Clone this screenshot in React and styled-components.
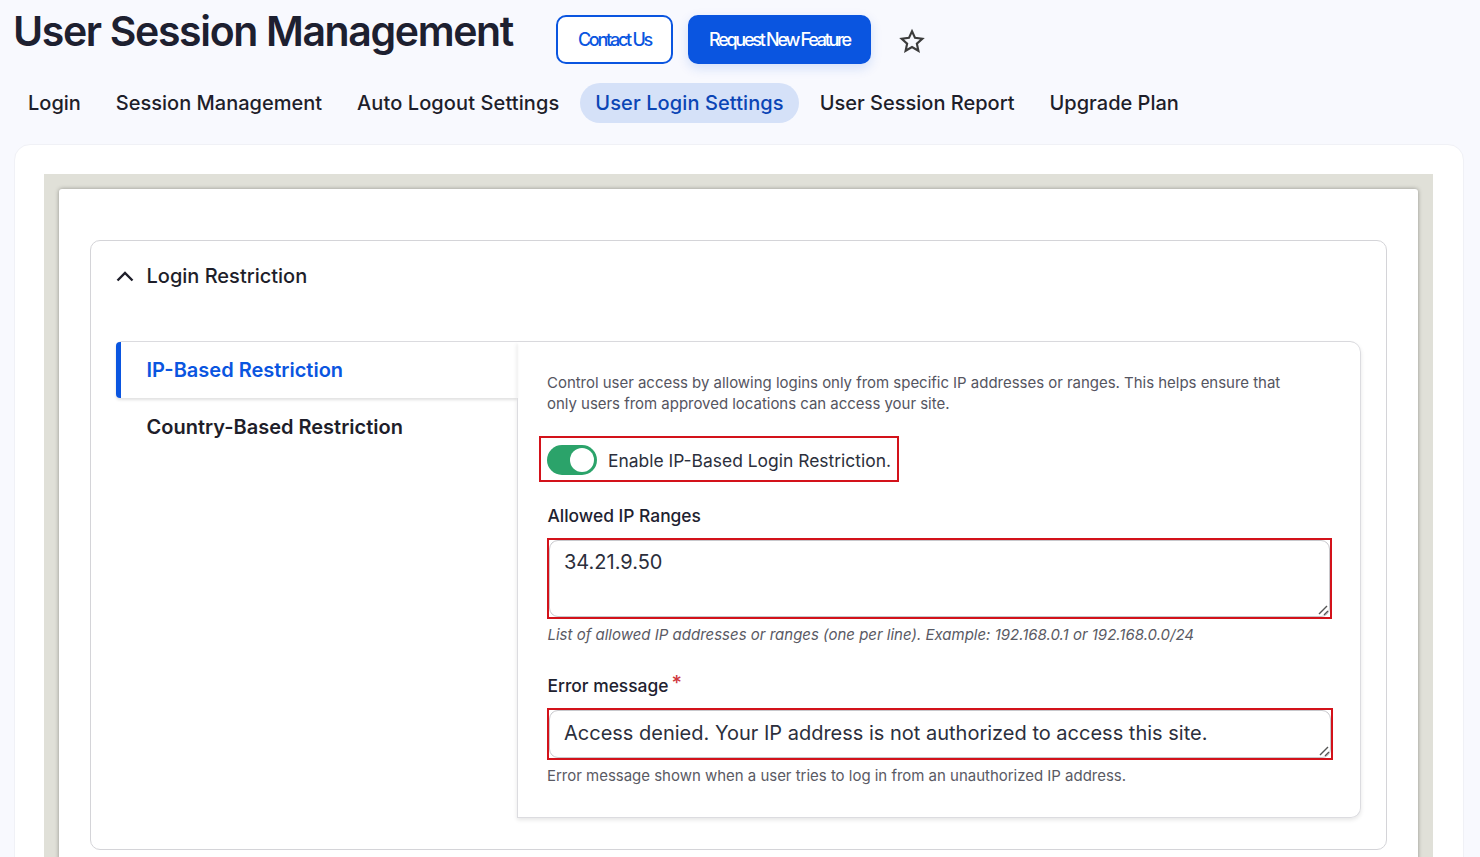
import React from "react";
import styled, { createGlobalStyle } from "styled-components";

const Global = createGlobalStyle`
  html, body { margin: 0; padding: 0; height: 857px; overflow: hidden; background: #f8f9fe; }
  body { font-family: Inter, "Liberation Sans", sans-serif; color: #1e1e2a; }
  #root { height: 857px; overflow: hidden; }
  * { box-sizing: border-box; }
`;

const Page = styled.div`
  width: 1480px;
  padding: 0 16px 0 14px;
`;
const Header = styled.header`
  display: flex;
  align-items: flex-start;
  height: 83px;
`;
const Title = styled.h1`
  margin: 8px 43px 0 -1px;
  font-size: 41px;
  line-height: 46px;
  font-weight: 600;
  letter-spacing: -1.36px;
  color: #1d2030;
  white-space: nowrap;
`;
const Button = styled.button`
  height: 49px;
  margin: 15px 15px 0 0;
  padding: 0;
  width: ${p => p.$w}px;
  border-radius: 10px;
  border: 2px solid #0a55e0;
  font: 500 18px Inter, sans-serif;
  letter-spacing: -2.27px;
  background: ${p => (p.$primary ? "#0a55e0" : "#ffffff")};
  color: ${p => (p.$primary ? "#ffffff" : "#0a55e0")};
  box-shadow: ${p => (p.$primary ? "0 4px 12px rgba(10,85,224,0.16)" : "none")};
`;
const StarWrap = styled.span`
  display: flex;
  margin: 28px 0 0 13px;
  color: #3c3c3c;
  height: 26px;
`;
const Tabs = styled.nav`
  display: flex;
  align-items: center;
  height: 40px;
  gap: 6px;
`;
const Tab = styled.a`
  height: 40px;
  display: flex;
  align-items: center;
  margin-left: ${p => (p.$first ? -0.5 : 0)}px;
  padding: 0 ${p => (p.$active ? 15.5 : 14.5)}px;
  border-radius: 21px;
  font-size: 20px;
  font-weight: 500;
  letter-spacing: ${p => (p.$wide ? 0.1 : 0)}px;
  color: ${p => (p.$active ? "#0b45b5" : "#1e1e2a")};
  background: ${p => (p.$active ? "#d5e1f8" : "transparent")};
  white-space: nowrap;
`;
const Card = styled.section`
  margin-top: 21px;
  width: 1450px;
  height: 760px;
  padding: 29px 30px 0 29px;
  background: #ffffff;
  border: 1px solid #f0f1f6;
  border-radius: 16px;
`;
const Frame = styled.div`
  background: #e0e0d8;
  height: 720px;
  padding: 15px 15px 0;
`;
const Sheet = styled.div`
  background: #ffffff;
  height: 700px;
  padding: 51px 31px 0 31px;
  border-radius: 3px;
  box-shadow: 0 0 4px rgba(0,0,0,0.35);
`;
const Accordion = styled.div`
  border: 1px solid #d4d4d8;
  border-radius: 10px;
  height: 610px;
  padding: 0 26px 0 25px;
`;
const AccordionHead = styled.div`
  display: flex;
  align-items: center;
  gap: 12.5px;
  height: 70px;
  font-size: 20px;
  font-weight: 500;
  color: #1e1e2a;
`;
const VTabs = styled.div`
  display: flex;
  margin-top: 30px;
  border-top: 1px solid #dcdce0;
  border-radius: 6px 10px 0 0;
  height: 477px;
`;
const Side = styled.div`
  width: 401px;
  flex: none;
`;
const SideItem = styled.div`
  height: ${p => (p.$active ? 56 : 57)}px;
  display: flex;
  align-items: center;
  padding-left: ${p => (p.$active ? 25.5 : 30.5)}px;
  font-size: 20px;
  font-weight: 600;
  color: ${p => (p.$active ? "#0a55e0" : "#1e1e2a")};
  border-left: ${p => (p.$active ? "5px solid #0a55e0" : "0")};
  border-radius: ${p => (p.$active ? "4px 0 0 4px" : "0")};
  box-shadow: ${p => (p.$active ? "0 2px 3px rgba(0,0,0,0.12)" : "none")};
`;
const Panel = styled.div`
  flex: 1;
  position: relative;
  padding: 30px 27px 0 30px;
  border-right: 1px solid #dcdce0;
  border-bottom: 1px solid #dcdce0;
  border-radius: 0 10px 10px 0;
  box-shadow: 0 2px 4px rgba(0,0,0,0.1);
  &::before {
    content: "";
    position: absolute;
    left: 0;
    top: 56px;
    bottom: 0;
    border-left: 1px solid #dcdce0;
  }
`;
const Intro = styled.p`
  margin: 0;
  font-size: 15px;
  line-height: 21px;
  letter-spacing: -0.03px;
  color: #55555f;
  width: 750px;
`;
const ToggleRow = styled.div`
  display: inline-flex;
  align-items: center;
  gap: 11px;
  margin: 22px 0 0 -8px;
  height: 46px;
  padding: 2px 6px 0;
  border: 2px solid #d3121a;
`;
const Switch = styled.span`
  position: relative;
  display: block;
  width: 50px;
  height: 30px;
  border-radius: 15px;
  background: #2ba36a;
  &::after {
    content: "";
    position: absolute;
    right: 3px;
    top: 3px;
    width: 24px;
    height: 24px;
    border-radius: 50%;
    background: #ffffff;
  }
`;
const ToggleLabel = styled.span`
  font-size: 17.45px;
  color: #2c2f3c;
`;
const Label = styled.div`
  margin: ${p => p.$mt}px 0 0 0.5px;
  font-size: 17.4px;
  line-height: 24px;
  font-weight: 500;
  color: #1e2230;
  white-space: nowrap;
`;
const Required = styled.sup`
  color: #d0383e;
  font-size: 20px;
  line-height: 0;
  margin-left: 3px;
  vertical-align: 2px;
`;
const RedBox = styled.div`
  position: relative;
  margin-top: ${p => p.$mt}px;
  width: ${p => p.$w}px;
  height: ${p => p.$h}px;
  border: 2px solid #d3121a;
`;
const Field = styled.div`
  height: 100%;
  padding: ${p => p.$pt}px 16px 0 14px;
  border: 1px solid #c8c8cc;
  border-radius: 9px;
  font-size: 20px;
  line-height: 28px;
  color: #2c2f3c;
  background: #ffffff;
  overflow: hidden;
  white-space: nowrap;
`;
const Grip = styled.svg`
  position: absolute;
  right: 1px;
  bottom: 1px;
`;
const Help = styled.div`
  margin: ${p => p.$mt}px 0 0 ${p => (p.$italic ? 0.5 : 0)}px;
  font-size: 15px;
  line-height: 20px;
  color: #5a5a64;
  font-style: ${p => (p.$italic ? "italic" : "normal")};
  letter-spacing: ${p => (p.$italic ? 0 : -0.02)}px;
  white-space: nowrap;
`;

const tabs = ["Login", "Session Management", "Auto Logout Settings", "User Login Settings", "User Session Report", "Upgrade Plan"];

const ResizeGrip = () => (
  <Grip width="11" height="11" viewBox="0 0 11 11" fill="none" stroke="#555" strokeWidth="1.4">
    <path d="M1 9L9 1M6 10l4-4" />
  </Grip>
);

export default function App() {
  return (
    <Page>
      <Global />
      <Header>
        <Title>User Session Management</Title>
        <Button $w={117}>Contact Us</Button>
        <Button $primary $w={183}>Request New Feature</Button>
        <StarWrap>
          <svg width="26" height="26" viewBox="0 0 24 24" fill="none" stroke="currentColor" strokeWidth="2" strokeLinejoin="miter">
            <path d="M12 3l2.8 6.1 6.7.8-5 4.5 1.4 6.6L12 17.6 6.1 21l1.4-6.6-5-4.5 6.7-.8z" />
          </svg>
        </StarWrap>
      </Header>
      <Tabs>
        {tabs.map((t, i) => (
          <Tab key={t} $first={i === 0} $active={t === "User Login Settings"} $wide={t.endsWith("Settings")}>{t}</Tab>
        ))}
      </Tabs>
      <Card>
        <Frame>
          <Sheet>
            <Accordion>
              <AccordionHead>
                <svg width="18" height="18" viewBox="0 0 18 18" fill="none" stroke="#1e1e2a" strokeWidth="2.4">
                  <path d="M1.5 13.5L9 6l7.5 7.5" />
                </svg>
                Login Restriction
              </AccordionHead>
              <VTabs>
                <Side>
                  <SideItem $active>IP-Based Restriction</SideItem>
                  <SideItem>Country-Based Restriction</SideItem>
                </Side>
                <Panel>
                  <Intro>
                    Control user access by allowing logins only from specific IP addresses or ranges. This helps ensure that only users from approved locations can access your site.
                  </Intro>
                  <ToggleRow>
                    <Switch />
                    <ToggleLabel>Enable IP-Based Login Restriction.</ToggleLabel>
                  </ToggleRow>
                  <Label $mt={22}>Allowed IP Ranges</Label>
                  <RedBox $mt={10} $w={785} $h={81}>
                    <Field $pt={7}>34.21.9.50</Field>
                    <ResizeGrip />
                  </RedBox>
                  <Help $italic $mt={6}>List of allowed IP addresses or ranges (one per line). Example: 192.168.0.1 or 192.168.0.0/24</Help>
                  <Label $mt={29}>Error message<Required>*</Required></Label>
                  <RedBox $mt={10} $w={786} $h={52}>
                    <Field $pt={8}>Access denied. Your IP address is not authorized to access this site.</Field>
                    <ResizeGrip />
                  </RedBox>
                  <Help $mt={6}>Error message shown when a user tries to log in from an unauthorized IP address.</Help>
                </Panel>
              </VTabs>
            </Accordion>
          </Sheet>
        </Frame>
      </Card>
    </Page>
  );
}
